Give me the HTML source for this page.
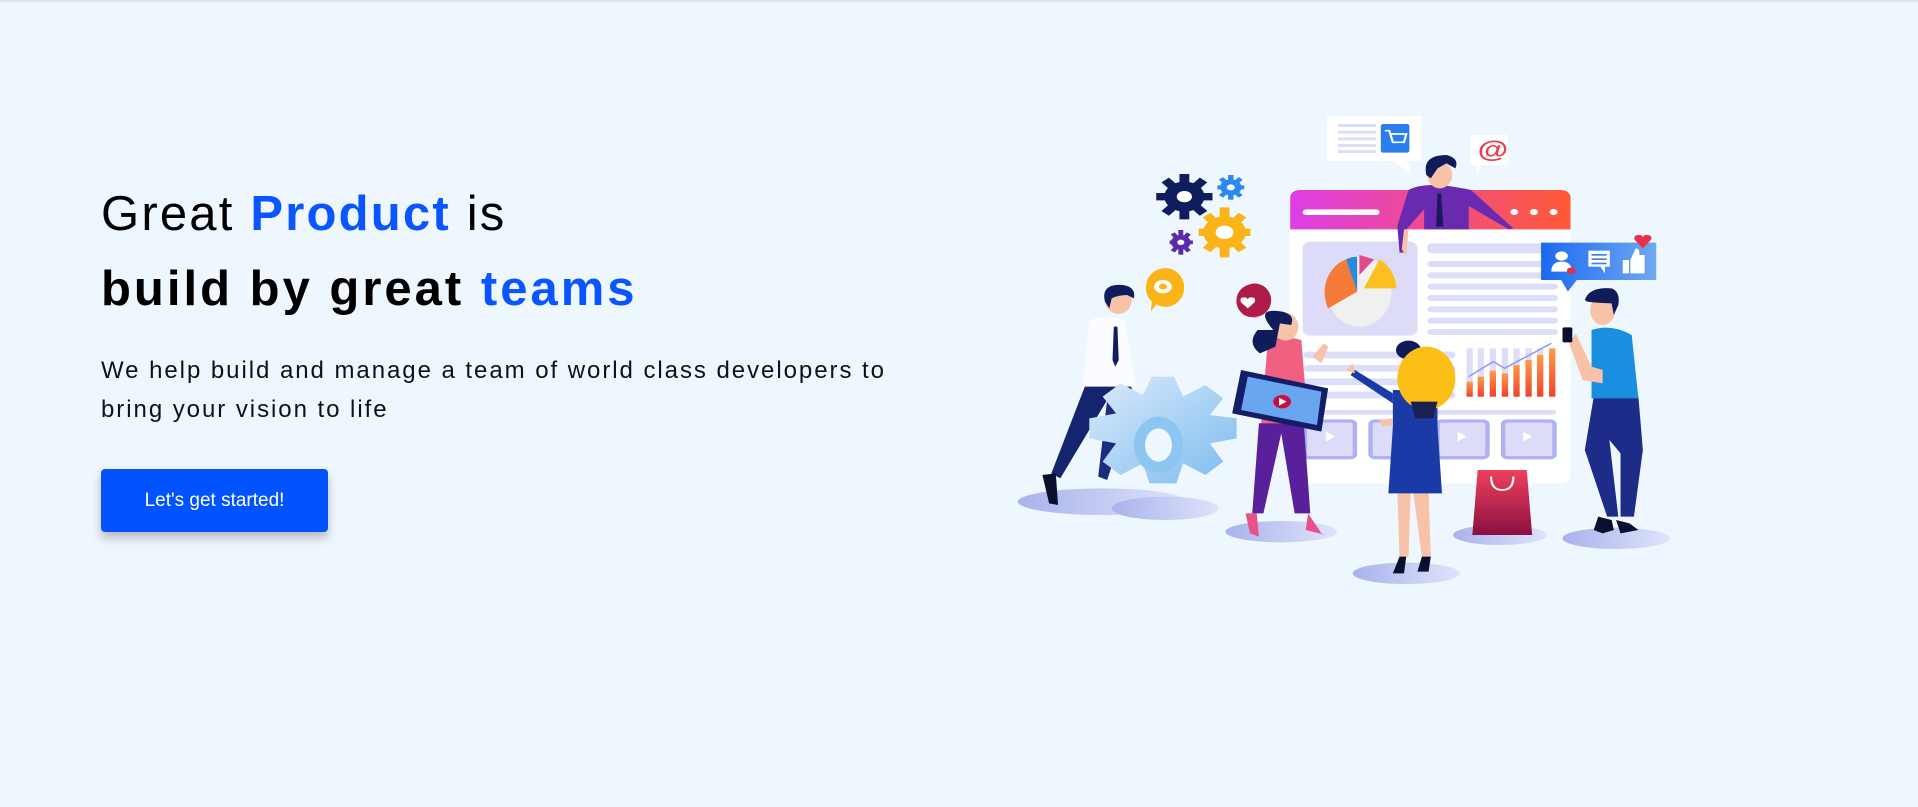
<!DOCTYPE html>
<html><head><meta charset="utf-8"><style>
html,body{margin:0;padding:0;}
body{width:1918px;height:807px;background:#eff7fe;position:relative;overflow:hidden;font-family:"Liberation Sans",sans-serif;}
.top{position:absolute;left:0;top:0;width:1918px;height:2px;background:#dfe3e8;}
h1{position:absolute;left:101px;margin:0;font-size:49px;font-weight:400;color:#000;white-space:nowrap;letter-spacing:3px}
.l1{top:186px;font-weight:300;letter-spacing:2.2px}
.l2{top:261px;font-weight:700}
.b{color:#0a55ff;font-weight:700}
p{position:absolute;left:101px;top:351px;margin:0;font-size:24px;line-height:39px;color:#111;width:830px;letter-spacing:1.95px}
.btn{position:absolute;left:101px;top:469px;width:227px;height:63px;background:#0152ff;border-radius:4px;color:#fff;font-size:19px;line-height:63px;text-align:center;box-shadow:0 6px 10px rgba(0,0,0,0.25)}
svg{position:absolute;left:1000px;top:100px;}
</style></head><body>
<div class="top"></div>
<h1 class="l1">Great <span class="b">Product</span> is</h1>
<h1 class="l2">build by great <span class="b">teams</span></h1>
<p>We help build and manage a team of world class developers to bring your vision to life</p>
<div class="btn">Let's get started!</div>
<svg width="700" height="500" viewBox="0 0 1568 1500" preserveAspectRatio="none">
<defs>
<linearGradient id="hd" x1="0" x2="1"><stop offset="0" stop-color="#de3ee6"/><stop offset="1" stop-color="#ff5a36"/></linearGradient>
<linearGradient id="bar" x1="0" y1="0" x2="0" y2="1"><stop offset="0" stop-color="#ff9a4a"/><stop offset="1" stop-color="#f0422a"/></linearGradient>
<linearGradient id="soc" x1="0" x2="1"><stop offset="0" stop-color="#1a6af2"/><stop offset="1" stop-color="#70a8f0"/></linearGradient>
<linearGradient id="gear" x1="0" y1="0" x2="1" y2="1"><stop offset="0" stop-color="#dbeafb"/><stop offset="1" stop-color="#7cbcf0"/></linearGradient>
<linearGradient id="bag" x1="0" y1="0" x2="0" y2="1"><stop offset="0" stop-color="#f0405e"/><stop offset="1" stop-color="#8a1040"/></linearGradient>
<linearGradient id="sh" x1="0" x2="1"><stop offset="0" stop-color="#a9b2ec"/><stop offset="1" stop-color="#dfe4fa"/></linearGradient>
</defs>
<ellipse cx="230" cy="1205" rx="190" ry="40" fill="url(#sh)"/>
<ellipse cx="370" cy="1225" rx="120" ry="35" fill="url(#sh)"/>
<ellipse cx="630" cy="1295" rx="125" ry="32" fill="url(#sh)"/>
<ellipse cx="910" cy="1420" rx="120" ry="32" fill="url(#sh)"/>
<ellipse cx="1120" cy="1305" rx="105" ry="30" fill="url(#sh)"/>
<ellipse cx="1380" cy="1315" rx="120" ry="32" fill="url(#sh)"/>
<rect x="650" y="270" width="628" height="880" rx="22" fill="#fff"/>
<path d="M650 292 a22 22 0 0 1 22 -22 h584 a22 22 0 0 1 22 22 v96 h-628z" fill="url(#hd)"/>
<rect x="678" y="328" width="172" height="17" rx="8" fill="#fff"/>
<circle cx="1152" cy="336" r="9" fill="#fff"/><circle cx="1196" cy="336" r="9" fill="#fff"/><circle cx="1240" cy="336" r="9" fill="#fff"/>
<rect x="678" y="425" width="257" height="282" rx="18" fill="#dcdcf8"/>
<ellipse cx="805" cy="575" rx="72" ry="105" fill="#f0f0f0"/>
<path d="M800 575 L735 625 A72 105 0 0 1 775 478 Z" fill="#f47a3a"/>
<path d="M800 575 L775 478 A72 105 0 0 1 800 470 Z" fill="#2a8ad8"/>
<path d="M805 525 L805 465 L838 478 Z" fill="#e04a8a"/>
<path d="M815 565 L850 478 A72 105 0 0 1 888 565 Z" fill="#fbc020"/>
<g fill="#dcdef8">
<rect x="957" y="430" width="293" height="30" rx="10"/>
<rect x="957" y="483" width="293" height="18" rx="9"/>
<rect x="957" y="517" width="293" height="18" rx="9"/>
<rect x="957" y="551" width="293" height="18" rx="9"/>
<rect x="957" y="585" width="293" height="18" rx="9"/>
<rect x="957" y="619" width="293" height="18" rx="9"/>
<rect x="957" y="653" width="293" height="18" rx="9"/>
<rect x="957" y="687" width="293" height="18" rx="9"/>
<rect x="680" y="755" width="340" height="20" rx="9"/>
<rect x="680" y="795" width="340" height="20" rx="9"/>
<rect x="680" y="835" width="340" height="20" rx="9"/>
<rect x="680" y="875" width="340" height="20" rx="9"/>
<rect x="680" y="930" width="565" height="14" rx="6"/>
</g>
<g fill="#dcdcf8" stroke="#aeb2f2" stroke-width="10">
<rect x="683" y="963" width="112" height="110" rx="10"/>
<rect x="830" y="963" width="112" height="110" rx="10"/>
<rect x="980" y="963" width="112" height="110" rx="10"/>
<rect x="1127" y="963" width="115" height="110" rx="10"/>
</g>
<g fill="#fff"><path d="M730 995 l20 15 -20 15z"/><path d="M1025 995 l20 15 -20 15z"/><path d="M1172 995 l20 15 -20 15z"/></g>
<g fill="#dcdef8"><rect x="1045" y="745" width="14" height="145"/><rect x="1070" y="745" width="14" height="145"/><rect x="1097" y="745" width="14" height="145"/><rect x="1124" y="745" width="14" height="145"/><rect x="1150" y="745" width="14" height="145"/><rect x="1177" y="745" width="14" height="145"/><rect x="1203" y="745" width="14" height="145"/><rect x="1230" y="745" width="14" height="145"/></g>
<g fill="url(#bar)"><rect x="1045" y="845" width="14" height="45"/><rect x="1070" y="830" width="14" height="60"/><rect x="1097" y="812" width="14" height="78"/><rect x="1124" y="820" width="14" height="70"/><rect x="1150" y="795" width="14" height="95"/><rect x="1177" y="780" width="14" height="110"/><rect x="1203" y="765" width="14" height="125"/><rect x="1230" y="745" width="14" height="145"/></g>
<path d="M1050 830 L1105 785 L1130 805 L1235 730" stroke="#8d96f0" stroke-width="4" fill="none"/>
<path d="M733 48 h210 v135 h-30 l10 42 -40 -42 h-150z" fill="#fff"/>
<g fill="#dcdef8"><rect x="757" y="72" width="85" height="9"/><rect x="757" y="92" width="85" height="9"/><rect x="757" y="112" width="85" height="9"/><rect x="757" y="132" width="85" height="9"/><rect x="757" y="150" width="85" height="9"/></g>
<rect x="853" y="72" width="64" height="86" rx="6" fill="#2a7ef0"/>
<path d="M862 92 h10 l8 35 h25 l5 -25 h-35" stroke="#fff" stroke-width="5" fill="none"/>
<path d="M1053 105 h85 v90 h-60 l-10 30 v-30 h-15z" fill="#fff"/>
<text x="1070" y="172" font-family="Liberation Sans" font-size="70" fill="#ee3a4a" font-weight="700">@</text>
<path d="M1212 428 h258 v112 h-178 l-20 35 -15 -35 h-45z" fill="url(#soc)"/>
<circle cx="1258" cy="468" r="14" fill="#fff"/><path d="M1235 515 q0 -30 23 -30 q23 0 23 30z" fill="#fff"/><circle cx="1280" cy="512" r="10" fill="#e0304a"/>
<rect x="1318" y="452" width="48" height="48" fill="#fff"/><path d="M1345 500 l10 20 0 -20z" fill="#fff"/>
<g fill="#3a7ef0"><rect x="1325" y="462" width="34" height="5"/><rect x="1325" y="475" width="34" height="5"/><rect x="1325" y="488" width="34" height="5"/></g>
<path d="M1395 480 h14 v40 h-14z M1412 480 l12 -35 q10 0 8 20 h12 v55 h-32z" fill="#fff"/>
<path d="M1440 445 l-18 -25 q-5 -15 10 -15 q8 0 8 8 q0 -8 8 -8 q15 0 10 15z" fill="#e8304a"/>
<g>
<circle cx="413" cy="290" r="45" fill="#0f1c5e"/>
<g stroke="#0f1c5e" stroke-width="22"><line x1="413" y1="222" x2="413" y2="358"/><line x1="350" y1="290" x2="476" y2="290"/><line x1="370" y1="240" x2="456" y2="340"/><line x1="456" y1="240" x2="370" y2="340"/></g>
<circle cx="413" cy="290" r="17" fill="#fff"/>
<circle cx="517" cy="262" r="24" fill="#2a88f0"/><g stroke="#2a88f0" stroke-width="12"><line x1="517" y1="225" x2="517" y2="299"/><line x1="487" y1="262" x2="547" y2="262"/><line x1="495" y1="235" x2="539" y2="289"/><line x1="539" y1="235" x2="495" y2="289"/></g><circle cx="517" cy="262" r="9" fill="#fff"/>
<circle cx="503" cy="397" r="48" fill="#fbb417"/><g stroke="#fbb417" stroke-width="22"><line x1="503" y1="322" x2="503" y2="472"/><line x1="445" y1="397" x2="561" y2="397"/><line x1="463" y1="345" x2="543" y2="450"/><line x1="543" y1="345" x2="463" y2="450"/></g><circle cx="503" cy="397" r="20" fill="#fff"/>
<circle cx="405" cy="427" r="22" fill="#5a2aa8"/><g stroke="#5a2aa8" stroke-width="11"><line x1="405" y1="390" x2="405" y2="464"/><line x1="380" y1="427" x2="432" y2="427"/><line x1="387" y1="400" x2="423" y2="454"/><line x1="423" y1="400" x2="387" y2="454"/></g><circle cx="405" cy="427" r="8" fill="#fff"/>
</g>
<path d="M365 505 a42 58 0 1 1 -15 108 l-12 22 2 -30 a42 58 0 0 1 25 -100z" fill="#fbb417"/>
<circle cx="365" cy="560" r="20" fill="#fff"/><circle cx="365" cy="560" r="9" fill="#fbb417"/>
<path d="M555 555 a37 50 0 1 1 10 95 l20 5 -30 -5 a37 50 0 0 1 0 -95z" fill="#b01c48"/>
<path d="M555 625 l-15 -18 q-5 -15 7 -15 q8 0 8 8 q0 -8 8 -8 q12 0 7 15z" fill="#fff"/>
<path d="M190 860 L115 1120 L135 1135 L240 900 L300 880 L290 850z" fill="#14246e"/>
<path d="M95 1125 l30 -5 5 95 -20 -5z" fill="#0a0f2e"/>
<path d="M200 660 q40 -20 80 0 l25 200 h-120z" fill="#fbfcff"/>
<path d="M255 680 l8 0 3 100 -8 20 -6 -20z" fill="#0f1c5e"/>
<ellipse cx="265" cy="600" rx="30" ry="42" fill="#f7c2a8"/>
<path d="M235 605 q-10 -55 40 -50 q30 5 25 40 l-15 -10 q-20 0 -35 10 l-5 30z" fill="#0f1c5e"/>
<path d="M240 900 L220 1130 L240 1140 L300 900z" fill="#1a2d80"/>
<path d="M340 830 h50 l20 60 50 -35 40 40 -30 50 60 10 v60 l-60 15 30 55 -40 40 -50 -35 -15 60 h-60 l-15 -60 -50 35 -40 -40 30 -55 -60 -15 v-60 l60 -15 -30 -50 40 -40 50 35z" fill="url(#gear)"/>
<ellipse cx="355" cy="1035" rx="55" ry="85" fill="#8ec6f2"/>
<ellipse cx="355" cy="1035" rx="30" ry="50" fill="#eff7fe"/>
<path d="M580 970 L565 1240 h25 L630 1000 L660 1240 h35 L680 960z" fill="#5a1f9a"/>
<path d="M600 720 q35 -15 75 0 l15 250 h-105z" fill="#f06080"/>
<ellipse cx="640" cy="680" rx="28" ry="42" fill="#f7c2a8"/>
<path d="M612 690 q-45 -70 20 -55 q30 10 20 40 l-25 -5 -10 70 -35 20 q-30 -30 -5 -70z" fill="#101c5a"/>
<path d="M540 810 l195 55 -15 130 -200 -55z" fill="#141e66"/>
<path d="M555 830 l165 45 -10 100 -170 -45z" fill="#6aa6f0"/>
<circle cx="632" cy="905" r="20" fill="#c8103c"/><path d="M625 893 l17 12 -17 12z" fill="#fff"/>
<path d="M700 770 l25 -40 10 10 -15 50z" fill="#f7c2a8"/>
<path d="M550 1240 l25 0 5 70 -20 -10z M690 1240 l30 60 10 5 -45 -15z" fill="#e8508a"/>
<path d="M890 1170 l5 200 h20 l5 -200z M925 1170 l20 200 h20 l-5 -200z" fill="#f7c2a8"/>
<path d="M895 1370 l15 0 -5 50 -25 0z M945 1370 l20 0 -5 45 -25 0z" fill="#0a0f2e"/>
<path d="M880 870 h100 v110 l10 200 h-120 l10 -200z" fill="#1a3aa8"/>
<path d="M880 880 L795 810 L785 825 L880 910z" fill="#1a3aa8"/>
<circle cx="915" cy="750" r="28" fill="#101c5a"/>
<ellipse cx="955" cy="835" rx="65" ry="95" fill="#fbbf16"/>
<path d="M920 905 h60 l-10 50 h-40z" fill="#1c2050"/>
<path d="M790 790 l-15 20 20 10z M850 960 l30 -5 0 20 -25 5z" fill="#f7c2a8"/>
<path d="M1070 1110 h110 l12 195 h-134z" fill="url(#bag)"/>
<path d="M1100 1130 q0 40 25 40 q25 0 25 -40" stroke="#fff" stroke-width="5" fill="none"/>
<path d="M1330 890 h100 l10 160 -20 200 h-30 l0 -190 -25 -40 20 230 h-25 l-50 -200z" fill="#1c2c88"/>
<path d="M1340 1250 l30 10 5 30 -25 10 -20 -10z M1380 1260 l30 10 20 20 -40 10z" fill="#0a0f2e"/>
<path d="M1325 690 q45 -20 90 15 l15 190 h-105z" fill="#1a8fe0"/>
<path d="M1290 700 l35 100 25 10 0 40 -45 -10 -30 -110z" fill="#f7c2a8"/>
<rect x="1260" y="682" width="22" height="45" rx="4" fill="#0a0f2e"/>
<ellipse cx="1350" cy="630" rx="28" ry="45" fill="#f7c2a8"/>
<path d="M1310 600 q10 -40 60 -35 q20 10 15 50 l-10 30 -5 -35 q-25 0 -55 -5z" fill="#101c5a"/>
<path d="M915 270 q40 -30 140 0 l95 115 -10 3 -90 -70 v70 h-100 v-60 l-40 60 -5 70 -10 0 -5 -80z" fill="#6a2ab0"/>
<path d="M905 388 l-5 60 10 20 5 -80z" fill="#f7c2a8"/>
<ellipse cx="985" cy="225" rx="28" ry="40" fill="#f7c2a8"/>
<path d="M955 225 q-10 -60 45 -60 q30 10 20 40 l-20 -15 -20 15 -15 30z" fill="#101c5a"/>
<path d="M980 280 l8 0 5 100 -16 0z" fill="#1a1a5a"/>
</svg>
</body></html>
